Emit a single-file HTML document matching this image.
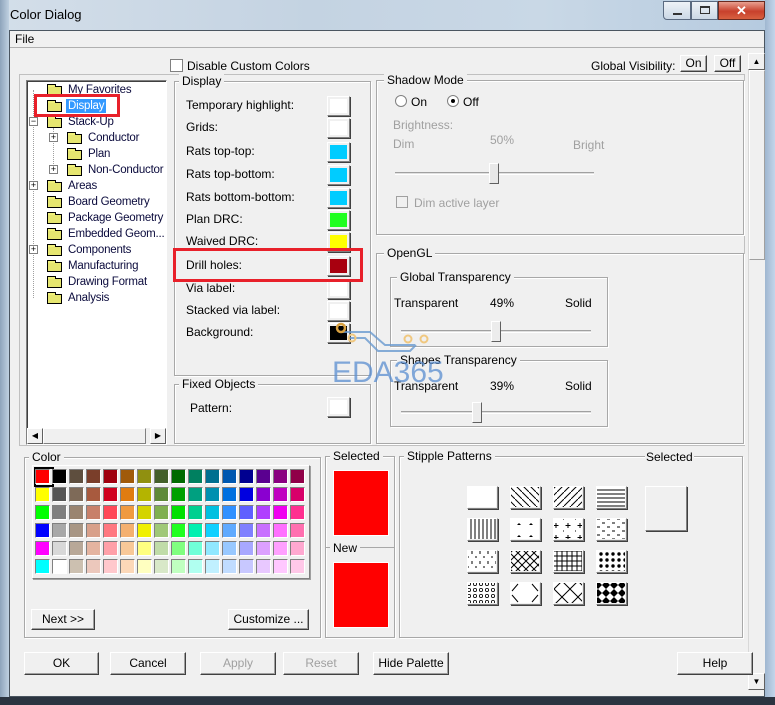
<!DOCTYPE html>
<html><head><meta charset="utf-8"><style>
*{box-sizing:border-box;margin:0;padding:0}
body{width:775px;height:705px;overflow:hidden;background:#f0f0f0;font-family:"Liberation Sans",sans-serif;font-size:12px;color:#000;position:relative}
.a{position:absolute}
.g{position:absolute;border:1px solid #a8a8a8;box-shadow:1px 1px 0 #fff inset,1px 1px 0 #fff}
.lg{position:absolute;background:#f0f0f0;padding:0 3px;top:-8px;left:6px;line-height:14px;white-space:nowrap}
.sw{position:absolute;width:23px;height:20px;border:1px solid;border-color:#fff #808080 #808080 #fff;box-shadow:1px 1px 0 #404040}
.sw i{position:absolute;left:2px;top:2px;right:2px;bottom:2px}
.btn{position:absolute;height:23px;border:1px solid;border-color:#fff #404040 #404040 #fff;box-shadow:inset -1px -1px 0 #a0a0a0;text-align:center;line-height:21px;background:#f0f0f0}
.dis{color:#a0a0a0}
.t{position:absolute;color:#0a0a3c;white-space:nowrap;line-height:14px;font-size:11.5px;letter-spacing:-0.2px}
.f{position:absolute;width:15px;height:10px;background:#f0f07a;border:1px solid #000;background-image:radial-gradient(#c8c850 0.6px,transparent 0.7px);background-size:2px 2px}
.f:before{content:"";position:absolute;left:-1px;top:-3px;width:7px;height:2px;border:1px solid #000;border-bottom:none;background:#f0f07a}
.pl{position:absolute;width:9px;height:9px;border:1px solid #808080;background:#fff;font-size:9px;line-height:7px;text-align:center}
.c{position:absolute;width:15px;height:15px;border:1px solid;border-color:#808080 #fff #fff #808080}
.st{position:absolute;width:31px;height:23px;border:1px solid;border-color:#fff #808080 #808080 #fff;box-shadow:1px 1px 0 #404040;background:none}
.sl{position:absolute;height:3px;border-top:1px solid #a0a0a0;border-bottom:1px solid #fff;background:#e0e0e0}
.th{position:absolute;width:10px;height:21px;border:1px solid;border-color:#fff #606060 #606060 #fff;background:#ececec}
</style></head><body>
<div class="a" style="left:0;top:0;width:775px;height:31px;background:linear-gradient(90deg,#d3dee9,#c4d3e2 40%,#c9d8e6 70%,#b5cadf)"></div>
<div class="a" style="left:0;top:0;width:9px;height:705px;background:linear-gradient(90deg,#8ea4bb,#bfd0e1)"></div>
<div class="a" style="left:765px;top:0;width:10px;height:705px;background:linear-gradient(90deg,#9fb6d0,#c4d6ea)"></div>
<div class="a" style="left:0;top:697px;width:775px;height:8px;background:#2b3440"></div>
<div class="a" style="left:9px;top:30px;width:756px;height:667px;border:1px solid #4a5560;background:#f0f0f0"></div>
<div class="a" style="left:10px;top:7px;font-size:13px;color:#000">Color Dialog</div>
<div class="a" style="left:663px;top:1px;width:28px;height:19px;border:1px solid #5a6a80;border-radius:0 0 0 4px;background:linear-gradient(#eef2f7,#cbd8e6)"><div class="a" style="left:9px;top:11px;width:9px;height:2px;background:#333"></div></div>
<div class="a" style="left:691px;top:1px;width:27px;height:19px;border:1px solid #5a6a80;background:linear-gradient(#eef2f7,#cbd8e6)"><div class="a" style="left:8px;top:4px;width:10px;height:8px;border:1px solid #333;border-top-width:2px"></div></div>
<div class="a" style="left:718px;top:1px;width:47px;height:19px;border:1px solid #6a2a20;border-radius:0 0 4px 0;background:linear-gradient(#e8a090,#c8402c 55%,#d86040);color:#fff;font-weight:bold;text-align:center;line-height:17px;font-size:13px">✕</div>
<div class="a" style="left:10px;top:31px;width:754px;height:17px;background:#f0f0f0;border-bottom:1px solid #b0b0b0"></div>
<div class="a" style="left:15px;top:32px">File</div>
<div class="a" style="left:748px;top:53px;width:17px;height:637px;background:#f0f0f0;border-left:1px solid #d8d8d8"></div>
<div class="a" style="left:748px;top:53px;width:17px;height:17px;border:1px solid;border-color:#fff #606060 #606060 #fff;text-align:center;font-size:8px;line-height:15px">▲</div>
<div class="a" style="left:749px;top:70px;width:16px;height:190px;border:1px solid;border-color:#fff #a0a0a0 #a0a0a0 #fff"></div>
<div class="a" style="left:748px;top:673px;width:17px;height:17px;border:1px solid;border-color:#fff #606060 #606060 #fff;text-align:center;font-size:8px;line-height:15px">▼</div>
<div class="a" style="left:170px;top:59px;width:13px;height:13px;border:1px solid #808080;background:#fff"></div>
<div class="a" style="left:187px;top:59px">Disable Custom Colors</div>
<div class="a" style="left:591px;top:59px">Global Visibility:</div>
<div class="btn" style="left:680px;top:55px;width:27px;height:17px;line-height:15px">On</div>
<div class="btn" style="left:714px;top:55px;width:27px;height:17px;line-height:15px">Off</div>
<div class="a" style="left:19px;top:74px;width:726px;height:372px;border:1px solid #c0c0c0"></div>
<div class="a" style="left:26px;top:80px;width:141px;height:365px;background:#fff;border:1px solid;border-color:#808080 #fff #fff #808080;box-shadow:inset 1px 1px 0 #404040"></div>
<div class="a" style="left:33px;top:90px;width:1px;height:208px;border-left:1px dotted #a0a0a0"></div>
<div class="a" style="left:53px;top:128px;width:1px;height:42px;border-left:1px dotted #a0a0a0"></div>
<div class="f" style="left:47px;top:86px"></div><div class="t" style="left:68px;top:83px">My Favorites</div>
<div class="f" style="left:47px;top:102px"></div><div class="t" style="left:66px;top:99px;background:#3399ff;color:#fff;padding:0 2px">Display</div>
<div class="pl" style="left:29px;top:117px">−</div><div class="f" style="left:47px;top:118px"></div><div class="t" style="left:68px;top:115px">Stack-Up</div>
<div class="pl" style="left:49px;top:133px">+</div><div class="f" style="left:67px;top:134px"></div><div class="t" style="left:88px;top:131px">Conductor</div>
<div class="f" style="left:67px;top:150px"></div><div class="t" style="left:88px;top:147px">Plan</div>
<div class="pl" style="left:49px;top:165px">+</div><div class="f" style="left:67px;top:166px"></div><div class="t" style="left:88px;top:163px">Non-Conductor</div>
<div class="pl" style="left:29px;top:181px">+</div><div class="f" style="left:47px;top:182px"></div><div class="t" style="left:68px;top:179px">Areas</div>
<div class="f" style="left:47px;top:198px"></div><div class="t" style="left:68px;top:195px">Board Geometry</div>
<div class="f" style="left:47px;top:214px"></div><div class="t" style="left:68px;top:211px">Package Geometry</div>
<div class="f" style="left:47px;top:230px"></div><div class="t" style="left:68px;top:227px">Embedded Geom...</div>
<div class="pl" style="left:29px;top:245px">+</div><div class="f" style="left:47px;top:246px"></div><div class="t" style="left:68px;top:243px">Components</div>
<div class="f" style="left:47px;top:262px"></div><div class="t" style="left:68px;top:259px">Manufacturing</div>
<div class="f" style="left:47px;top:278px"></div><div class="t" style="left:68px;top:275px">Drawing Format</div>
<div class="f" style="left:47px;top:294px"></div><div class="t" style="left:68px;top:291px">Analysis</div>
<div class="a" style="left:27px;top:428px;width:139px;height:16px;background:#f0f0f0"></div>
<div class="a" style="left:27px;top:428px;width:16px;height:16px;border:1px solid;border-color:#fff #606060 #606060 #fff;font-size:8px;text-align:center;line-height:14px">◀</div>
<div class="a" style="left:43px;top:428px;width:103px;height:16px;border:1px solid;border-color:#fff #808080 #808080 #fff"></div>
<div class="a" style="left:150px;top:428px;width:16px;height:16px;border:1px solid;border-color:#fff #606060 #606060 #fff;font-size:8px;text-align:center;line-height:14px">▶</div>
<div class="a" style="left:34px;top:94px;width:86px;height:23px;border:3px solid #e8202a"></div>
<div class="g" style="left:174px;top:81px;width:197px;height:295px"><div class="lg" style="left:4px">Display</div></div>
<div class="a" style="left:186px;top:98px">Temporary highlight:</div><div class="sw" style="left:327px;top:96px"><i style="background:#fff"></i></div>
<div class="a" style="left:186px;top:120px">Grids:</div><div class="sw" style="left:327px;top:118px"><i style="background:#fff"></i></div>
<div class="a" style="left:186px;top:144px">Rats top-top:</div><div class="sw" style="left:327px;top:142px"><i style="background:#00ccff"></i></div>
<div class="a" style="left:186px;top:167px">Rats top-bottom:</div><div class="sw" style="left:327px;top:165px"><i style="background:#00ccff"></i></div>
<div class="a" style="left:186px;top:190px">Rats bottom-bottom:</div><div class="sw" style="left:327px;top:188px"><i style="background:#00ccff"></i></div>
<div class="a" style="left:186px;top:212px">Plan DRC:</div><div class="sw" style="left:327px;top:210px"><i style="background:#20ff20"></i></div>
<div class="a" style="left:186px;top:234px">Waived DRC:</div><div class="sw" style="left:327px;top:232px"><i style="background:#ffff00"></i></div>
<div class="a" style="left:186px;top:258px">Drill holes:</div><div class="sw" style="left:327px;top:256px"><i style="background:#a8000f"></i></div>
<div class="a" style="left:186px;top:281px">Via label:</div><div class="sw" style="left:327px;top:279px"><i style="background:#fff"></i></div>
<div class="a" style="left:186px;top:303px">Stacked via label:</div><div class="sw" style="left:327px;top:301px"><i style="background:#fff"></i></div>
<div class="a" style="left:186px;top:325px">Background:</div><div class="sw" style="left:327px;top:323px"><i style="background:#000"></i></div>
<div class="a" style="left:173px;top:248px;width:190px;height:34px;border:3px solid #e8202a"></div>
<div class="g" style="left:174px;top:384px;width:197px;height:60px"><div class="lg" style="left:4px">Fixed Objects</div></div>
<div class="a" style="left:190px;top:401px">Pattern:</div><div class="sw" style="left:327px;top:397px"><i style="background:#fff"></i></div>
<div class="g" style="left:376px;top:80px;width:368px;height:155px"><div class="lg" style="left:7px">Shadow Mode</div></div>
<div class="a" style="left:395px;top:95px;width:12px;height:12px;border-radius:50%;border:1px solid #808080;background:#fff"></div><div class="a" style="left:411px;top:95px">On</div>
<div class="a" style="left:447px;top:95px;width:12px;height:12px;border-radius:50%;border:1px solid #808080;background:#fff"><div class="a" style="left:3px;top:3px;width:4px;height:4px;border-radius:50%;background:#000"></div></div><div class="a" style="left:463px;top:95px">Off</div>
<div class="a dis" style="left:393px;top:118px">Brightness:</div>
<div class="a dis" style="left:393px;top:137px">Dim</div>
<div class="a dis" style="left:490px;top:133px">50%</div>
<div class="a dis" style="left:573px;top:138px">Bright</div>
<div class="sl" style="left:395px;top:172px;width:199px"></div>
<div class="th" style="left:489px;top:163px;background:#e8e8e8"></div>
<div class="a" style="left:396px;top:196px;width:12px;height:12px;border:1px solid #a0a0a0"></div>
<div class="a dis" style="left:414px;top:196px">Dim active layer</div>
<div class="g" style="left:376px;top:253px;width:368px;height:191px"><div class="lg" style="left:7px">OpenGL</div></div>
<div class="g" style="left:390px;top:277px;width:218px;height:70px"><div class="lg" style="left:6px">Global Transparency</div></div>
<div class="a" style="left:394px;top:296px">Transparent</div><div class="a" style="left:490px;top:296px">49%</div><div class="a" style="left:565px;top:296px">Solid</div>
<div class="sl" style="left:401px;top:330px;width:190px"></div>
<div class="th" style="left:491px;top:321px"></div>
<div class="g" style="left:390px;top:360px;width:218px;height:67px"><div class="lg" style="left:6px">Shapes Transparency</div></div>
<div class="a" style="left:394px;top:379px">Transparent</div><div class="a" style="left:490px;top:379px">39%</div><div class="a" style="left:565px;top:379px">Solid</div>
<div class="sl" style="left:401px;top:411px;width:190px"></div>
<div class="th" style="left:472px;top:402px"></div>
<svg class="a" style="left:330px;top:320px" width="130" height="70"><g fill="none" stroke="#6a9ad0" stroke-width="2" opacity="0.8"><path d="M10 12 H40 L55 25 H85"/><path d="M20 18 H35 L48 31 H80 L86 25"/></g><circle cx="11" cy="8" r="4" fill="none" stroke="#d8a040" stroke-width="2.5"/><circle cx="22" cy="18" r="3.5" fill="none" stroke="#f0c880" stroke-width="2"/><circle cx="78" cy="19" r="3.5" fill="none" stroke="#f0c880" stroke-width="2"/><circle cx="94" cy="19" r="3.5" fill="none" stroke="#f0c880" stroke-width="2"/><text x="2" y="62" font-family="Liberation Sans" font-size="30" fill="#5a8ed0" opacity="0.75">EDA365</text></svg>
<div class="g" style="left:24px;top:457px;width:297px;height:181px"><div class="lg" style="left:4px">Color</div></div>
<div class="a" style="left:32px;top:465px;width:278px;height:114px;border:1px solid;border-color:#fff #808080 #808080 #fff;box-shadow:1px 1px 0 #a0a0a0"></div>
<div class="a" style="left:34px;top:467px;width:20px;height:20px;border:2px solid #000"></div>
<div class="btn" style="left:31px;top:609px;width:64px;height:21px;line-height:19px">Next &gt;&gt;</div>
<div class="btn" style="left:228px;top:609px;width:81px;height:21px;line-height:19px">Customize ...</div>
<div class="g" style="left:325px;top:456px;width:70px;height:182px"><div class="lg" style="left:4px">Selected</div></div>
<div class="a" style="left:326px;top:547px;width:68px;height:1px;background:#a8a8a8"></div>
<div class="a" style="left:330px;top:541px;background:#f0f0f0;padding:0 3px">New</div>
<div class="a" style="left:333px;top:470px;width:56px;height:66px;background:#ff0000;border:1px solid #fff"></div>
<div class="a" style="left:333px;top:562px;width:56px;height:66px;background:#ff0000;border:1px solid #fff"></div>
<div class="g" style="left:399px;top:456px;width:344px;height:182px"><div class="lg" style="left:4px">Stipple Patterns</div></div>
<div class="a" style="left:645px;top:450px;background:#f0f0f0;padding:0 1px">Selected</div>
<div class="st" style="left:645px;top:486px;width:42px;height:45px;background:#f0f0f0"></div>
<svg class="a" style="left:466px;top:485px" width="170" height="125">
<defs>
<pattern id="p1" width="7" height="7" patternUnits="userSpaceOnUse"><path d="M0 0L7 7" stroke="#000"/></pattern>
<pattern id="p2" width="7" height="7" patternUnits="userSpaceOnUse"><path d="M7 0L0 7" stroke="#000"/></pattern>
<pattern id="p3" width="4" height="4" patternUnits="userSpaceOnUse"><path d="M0 1H4" stroke="#000"/></pattern>
<pattern id="p4" width="4" height="4" patternUnits="userSpaceOnUse"><path d="M1 0V4" stroke="#000"/></pattern>
<pattern id="p5" width="8" height="8" patternUnits="userSpaceOnUse"><path d="M0 0L8 8M8 0L0 8" stroke="#000"/></pattern>
<pattern id="p6" width="5" height="5" patternUnits="userSpaceOnUse"><path d="M0 1H5M1 0V5" stroke="#000"/></pattern>
<pattern id="p7" width="6" height="6" patternUnits="userSpaceOnUse"><circle cx="3" cy="3" r="1.7"/></pattern>
<pattern id="p8" width="6" height="6" patternUnits="userSpaceOnUse"><circle cx="3" cy="3" r="1.6" fill="none" stroke="#000" stroke-width="0.8"/></pattern>
<pattern id="p9" width="8" height="8" patternUnits="userSpaceOnUse"><path d="M4 0L8 4L4 8L0 4Z"/></pattern>
<pattern id="pa" width="12" height="12" patternUnits="userSpaceOnUse"><path d="M3 4l2 -2l2 2z M1 9h1M8 9h1"/></pattern>
<pattern id="pb" width="12" height="12" patternUnits="userSpaceOnUse"><path d="M6 2v5M3.5 4.5h5M1 10h1" stroke="#000"/></pattern>
<pattern id="pc" width="10" height="8" patternUnits="userSpaceOnUse"><path d="M1 2h3M6 6h3" stroke="#000"/></pattern>
<pattern id="pd" width="8" height="10" patternUnits="userSpaceOnUse"><path d="M2 1v2M6 6v3" stroke="#000"/></pattern>
<pattern id="pe" width="16" height="16" patternUnits="userSpaceOnUse"><path d="M0 0L16 16M16 0L0 16" stroke="#000"/></pattern>
</defs>
<g stroke="none">
<rect x="2" y="2" width="28" height="20" fill="#fff"/>
<rect x="45" y="2" width="28" height="20" fill="#fff"/><rect x="45" y="2" width="28" height="20" fill="url(#p1)"/>
<rect x="88" y="2" width="28" height="20" fill="#fff"/><rect x="88" y="2" width="28" height="20" fill="url(#p2)"/>
<rect x="131" y="2" width="28" height="20" fill="#fff"/><rect x="131" y="2" width="28" height="20" fill="url(#p3)"/>
<rect x="2" y="34" width="28" height="20" fill="#fff"/><rect x="2" y="34" width="28" height="20" fill="url(#p4)"/>
<rect x="45" y="34" width="28" height="20" fill="#fff"/><rect x="45" y="34" width="28" height="20" fill="url(#pa)"/>
<rect x="88" y="34" width="28" height="20" fill="#fff"/><rect x="88" y="34" width="28" height="20" fill="url(#pb)"/>
<rect x="131" y="34" width="28" height="20" fill="#fff"/><rect x="131" y="34" width="28" height="20" fill="url(#pc)"/>
<rect x="2" y="66" width="28" height="20" fill="#fff"/><rect x="2" y="66" width="28" height="20" fill="url(#pd)"/>
<rect x="45" y="66" width="28" height="20" fill="#fff"/><rect x="45" y="66" width="28" height="20" fill="url(#p5)"/>
<rect x="88" y="66" width="28" height="20" fill="#fff"/><rect x="88" y="66" width="28" height="20" fill="url(#p6)"/>
<rect x="131" y="66" width="28" height="20" fill="#fff"/><rect x="131" y="66" width="28" height="20" fill="url(#p7)"/>
<rect x="2" y="98" width="28" height="20" fill="#fff"/><rect x="2" y="98" width="28" height="20" fill="url(#p8)"/>
<rect x="45" y="98" width="28" height="20" fill="#fff"/>
<rect x="88" y="98" width="28" height="20" fill="#fff"/><rect x="88" y="98" width="28" height="20" fill="url(#pe)"/>
<rect x="131" y="98" width="28" height="20" fill="#fff"/><rect x="131" y="98" width="28" height="20" fill="url(#p9)"/>
</g>
<path d="M46 106L52 99M66 99L72 106M46 110L52 117M66 117L72 110" stroke="#000" fill="none"/>
</svg>
<div class="btn" style="left:24px;top:652px;width:75px">OK</div>
<div class="btn" style="left:110px;top:652px;width:76px">Cancel</div>
<div class="btn dis" style="left:200px;top:652px;width:76px">Apply</div>
<div class="btn dis" style="left:283px;top:652px;width:76px">Reset</div>
<div class="btn" style="left:373px;top:652px;width:76px">Hide Palette</div>
<div class="btn" style="left:677px;top:652px;width:76px">Help</div>
<div class="a" style="left:0;top:0">
<div class="c" style="left:35px;top:469px;background:#ff0000"></div><div class="c" style="left:52px;top:469px;background:#000000"></div><div class="c" style="left:69px;top:469px;background:#5e4e3e"></div><div class="c" style="left:86px;top:469px;background:#7a3e2a"></div><div class="c" style="left:103px;top:469px;background:#a0000f"></div><div class="c" style="left:120px;top:469px;background:#a05a0a"></div><div class="c" style="left:137px;top:469px;background:#909010"></div><div class="c" style="left:154px;top:469px;background:#44602a"></div><div class="c" style="left:171px;top:469px;background:#006a00"></div><div class="c" style="left:188px;top:469px;background:#008060"></div><div class="c" style="left:205px;top:469px;background:#007090"></div><div class="c" style="left:222px;top:469px;background:#0058b0"></div><div class="c" style="left:239px;top:469px;background:#000090"></div><div class="c" style="left:256px;top:469px;background:#5a0090"></div><div class="c" style="left:273px;top:469px;background:#8a0080"></div><div class="c" style="left:290px;top:469px;background:#900048"></div>
<div class="c" style="left:35px;top:487px;background:#ffff00"></div><div class="c" style="left:52px;top:487px;background:#555555"></div><div class="c" style="left:69px;top:487px;background:#7e6a58"></div><div class="c" style="left:86px;top:487px;background:#a85a3e"></div><div class="c" style="left:103px;top:487px;background:#d0001e"></div><div class="c" style="left:120px;top:487px;background:#e07c10"></div><div class="c" style="left:137px;top:487px;background:#b4b400"></div><div class="c" style="left:154px;top:487px;background:#5e8a38"></div><div class="c" style="left:171px;top:487px;background:#00a000"></div><div class="c" style="left:188px;top:487px;background:#00a080"></div><div class="c" style="left:205px;top:487px;background:#0090b0"></div><div class="c" style="left:222px;top:487px;background:#0070e0"></div><div class="c" style="left:239px;top:487px;background:#0000e0"></div><div class="c" style="left:256px;top:487px;background:#8a00d0"></div><div class="c" style="left:273px;top:487px;background:#c000c0"></div><div class="c" style="left:290px;top:487px;background:#d8006a"></div>
<div class="c" style="left:35px;top:505px;background:#00ff00"></div><div class="c" style="left:52px;top:505px;background:#808080"></div><div class="c" style="left:69px;top:505px;background:#9a8470"></div><div class="c" style="left:86px;top:505px;background:#c8806a"></div><div class="c" style="left:103px;top:505px;background:#ff4858"></div><div class="c" style="left:120px;top:505px;background:#f09a40"></div><div class="c" style="left:137px;top:505px;background:#d4d400"></div><div class="c" style="left:154px;top:505px;background:#80b050"></div><div class="c" style="left:171px;top:505px;background:#00e000"></div><div class="c" style="left:188px;top:505px;background:#00d090"></div><div class="c" style="left:205px;top:505px;background:#00c0e0"></div><div class="c" style="left:222px;top:505px;background:#3090ff"></div><div class="c" style="left:239px;top:505px;background:#6060ff"></div><div class="c" style="left:256px;top:505px;background:#b040ff"></div><div class="c" style="left:273px;top:505px;background:#f000f0"></div><div class="c" style="left:290px;top:505px;background:#ff3090"></div>
<div class="c" style="left:35px;top:523px;background:#0000ff"></div><div class="c" style="left:52px;top:523px;background:#a8a8a8"></div><div class="c" style="left:69px;top:523px;background:#a89684"></div><div class="c" style="left:86px;top:523px;background:#d8a08a"></div><div class="c" style="left:103px;top:523px;background:#ff7880"></div><div class="c" style="left:120px;top:523px;background:#f4b070"></div><div class="c" style="left:137px;top:523px;background:#f0f000"></div><div class="c" style="left:154px;top:523px;background:#a0c878"></div><div class="c" style="left:171px;top:523px;background:#20ff20"></div><div class="c" style="left:188px;top:523px;background:#00f0b0"></div><div class="c" style="left:205px;top:523px;background:#10d0ff"></div><div class="c" style="left:222px;top:523px;background:#60aaff"></div><div class="c" style="left:239px;top:523px;background:#8080ff"></div><div class="c" style="left:256px;top:523px;background:#c870ff"></div><div class="c" style="left:273px;top:523px;background:#ff70ff"></div><div class="c" style="left:290px;top:523px;background:#ff70b0"></div>
<div class="c" style="left:35px;top:541px;background:#ff00ff"></div><div class="c" style="left:52px;top:541px;background:#d8d8d8"></div><div class="c" style="left:69px;top:541px;background:#b8a898"></div><div class="c" style="left:86px;top:541px;background:#e4b4a0"></div><div class="c" style="left:103px;top:541px;background:#ffa0a8"></div><div class="c" style="left:120px;top:541px;background:#f8c898"></div><div class="c" style="left:137px;top:541px;background:#ffff80"></div><div class="c" style="left:154px;top:541px;background:#c0dca8"></div><div class="c" style="left:171px;top:541px;background:#80ff80"></div><div class="c" style="left:188px;top:541px;background:#70ffd8"></div><div class="c" style="left:205px;top:541px;background:#90e8ff"></div><div class="c" style="left:222px;top:541px;background:#98c8ff"></div><div class="c" style="left:239px;top:541px;background:#a8a8ff"></div><div class="c" style="left:256px;top:541px;background:#dca0ff"></div><div class="c" style="left:273px;top:541px;background:#ffa0ff"></div><div class="c" style="left:290px;top:541px;background:#ffa8d0"></div>
<div class="c" style="left:35px;top:559px;background:#00ffff"></div><div class="c" style="left:52px;top:559px;background:#ffffff"></div><div class="c" style="left:69px;top:559px;background:#ccc0b0"></div><div class="c" style="left:86px;top:559px;background:#ecc8bc"></div><div class="c" style="left:103px;top:559px;background:#ffc8cc"></div><div class="c" style="left:120px;top:559px;background:#fcd8b8"></div><div class="c" style="left:137px;top:559px;background:#ffffc0"></div><div class="c" style="left:154px;top:559px;background:#d8e8c8"></div><div class="c" style="left:171px;top:559px;background:#c0ffc0"></div><div class="c" style="left:188px;top:559px;background:#b0fff0"></div><div class="c" style="left:205px;top:559px;background:#c0f0ff"></div><div class="c" style="left:222px;top:559px;background:#c0dcff"></div><div class="c" style="left:239px;top:559px;background:#c8c8ff"></div><div class="c" style="left:256px;top:559px;background:#e8c8ff"></div><div class="c" style="left:273px;top:559px;background:#ffc8ff"></div><div class="c" style="left:290px;top:559px;background:#ffc8e8"></div>
</div>
<div class="st" style="left:467px;top:486px"></div><div class="st" style="left:510px;top:486px"></div><div class="st" style="left:553px;top:486px"></div><div class="st" style="left:596px;top:486px"></div>
<div class="st" style="left:467px;top:518px"></div><div class="st" style="left:510px;top:518px"></div><div class="st" style="left:553px;top:518px"></div><div class="st" style="left:596px;top:518px"></div>
<div class="st" style="left:467px;top:550px"></div><div class="st" style="left:510px;top:550px"></div><div class="st" style="left:553px;top:550px"></div><div class="st" style="left:596px;top:550px"></div>
<div class="st" style="left:467px;top:582px"></div><div class="st" style="left:510px;top:582px"></div><div class="st" style="left:553px;top:582px"></div><div class="st" style="left:596px;top:582px"></div>
</body></html>
